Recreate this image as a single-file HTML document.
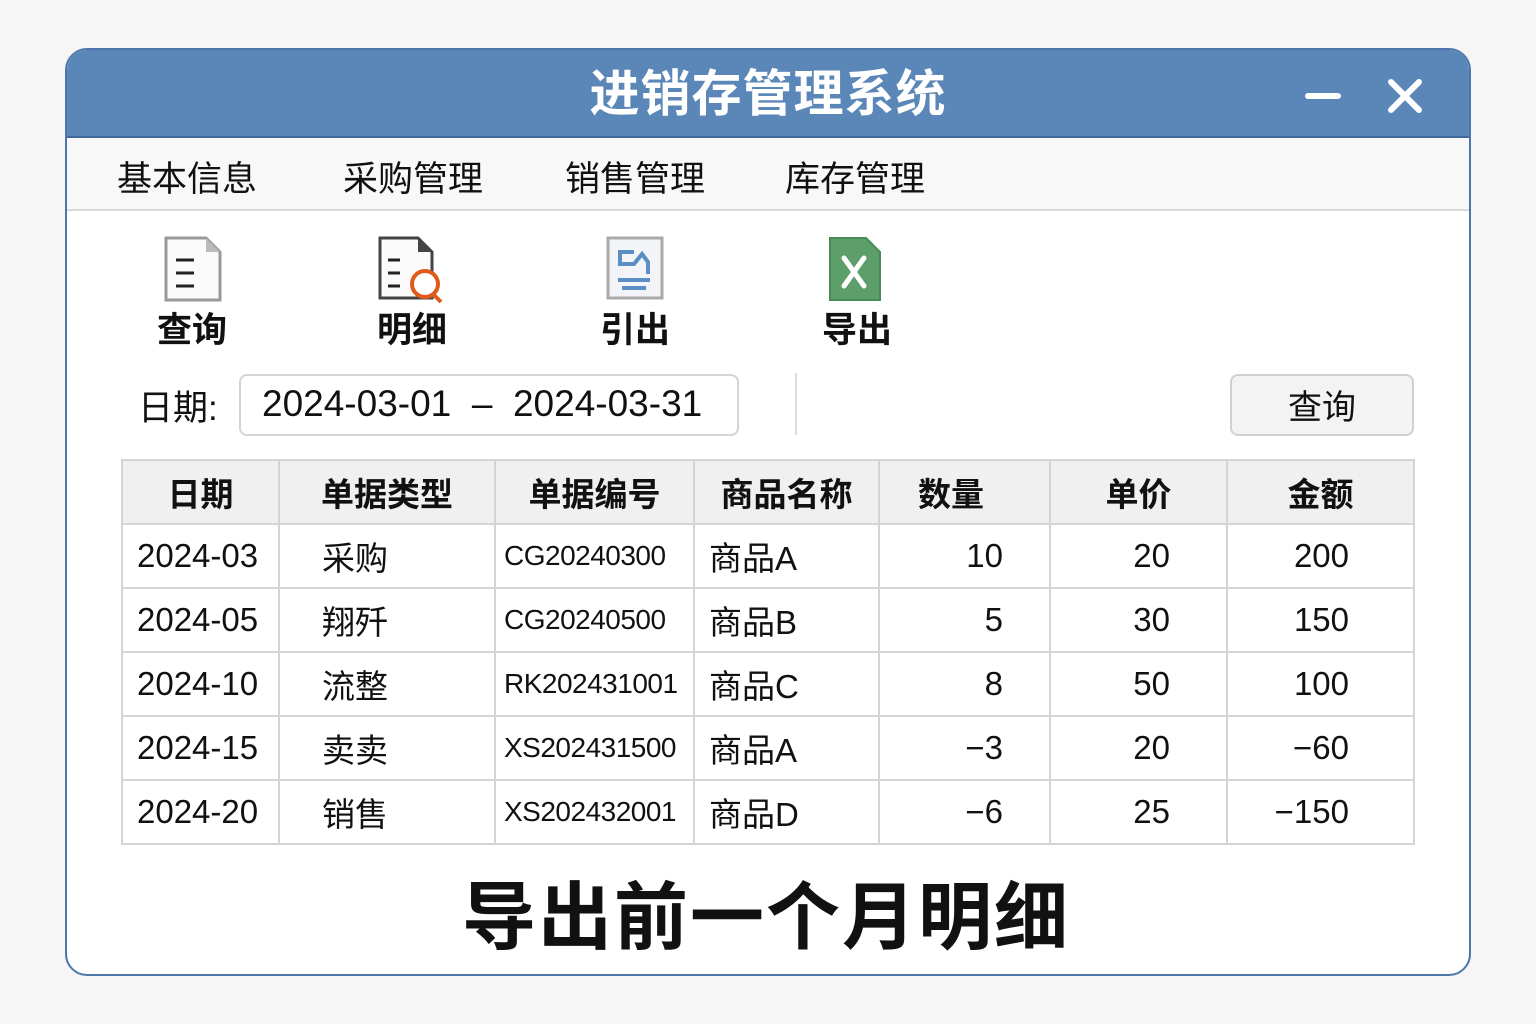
<!DOCTYPE html>
<html><head><meta charset="utf-8"><style>
*{margin:0;padding:0;box-sizing:border-box}
body{width:1536px;height:1024px;background:#f6f6f6;position:relative;overflow:hidden;font-family:"Liberation Sans","Noto Sans CJK SC",sans-serif;color:#111}
.a{position:absolute;white-space:nowrap}
#win{position:absolute;left:65px;top:48px;width:1406px;height:928px;border:2px solid #4d77aa;border-radius:22px;background:#fff;overflow:hidden}
#title{position:absolute;left:0;top:0;width:100%;height:88px;background:#5b87b8;border-bottom:2px solid #3f6a9c}
#menu{position:absolute;left:0;top:88px;width:100%;height:73px;background:#f8f8f8;border-bottom:2px solid #d8d8d8}
table{position:absolute;left:121px;top:459px;border-collapse:collapse;font-size:33px;table-layout:fixed;width:1292px}
td{border:2px solid #d4d4d4;height:64px;padding:0 14px;overflow:hidden;white-space:nowrap}
tr.h td{background:#f0f0f0;text-align:center;font-weight:bold;font-size:33px}
.r{text-align:right}
.c{font-size:28px;padding:0 8px !important;letter-spacing:-0.5px}
</style></head><body>
<div id="win">
<div id="title"><div class="a" style="left:0;width:100%;text-align:center;top:4px;font-size:50px;font-weight:bold;color:#fff;letter-spacing:1px">进销存管理系统</div>
<div class="a" style="left:1238px;top:43px;width:36px;height:6px;background:#fff;border-radius:3px"></div>
<svg class="a" style="left:1320px;top:28px" width="36" height="36"><path d="M4 4L32 32M32 4L4 32" stroke="#fff" stroke-width="6" stroke-linecap="round"/></svg>
</div>
<div id="menu">
<div class="a" style="left:50px;top:13px;font-size:35px">基本信息</div>
<div class="a" style="left:276px;top:13px;font-size:35px">采购管理</div>
<div class="a" style="left:498px;top:13px;font-size:35px">销售管理</div>
<div class="a" style="left:718px;top:13px;font-size:35px">库存管理</div>
</div>
</div>
<svg class="a" style="left:164px;top:236px" width="58" height="66"><path d="M2 2H42L56 16V64H2Z" fill="#fbfbfb" stroke="#999" stroke-width="3"/><path d="M42 2V16H56" fill="#bbb"/><path d="M12 24H30M12 37H30M12 50H30" stroke="#222" stroke-width="3"/></svg>
<div class="a" style="left:157px;top:302px;font-size:35px;font-weight:bold">查询</div>
<svg class="a" style="left:378px;top:236px" width="68" height="68"><path d="M2 2H40L54 16V62H2Z" fill="#fbfbfb" stroke="#444" stroke-width="3"/><path d="M40 2V16H54" fill="#444"/><path d="M10 24H22M10 37H22M10 50H22" stroke="#222" stroke-width="3"/><circle cx="47" cy="48" r="13" fill="#fff" stroke="#e05a1c" stroke-width="4"/><path d="M55 58L63 66" stroke="#e05a1c" stroke-width="4"/></svg>
<div class="a" style="left:377px;top:302px;font-size:35px;font-weight:bold">明细</div>
<svg class="a" style="left:606px;top:236px" width="58" height="64"><rect x="2" y="2" width="54" height="60" fill="#f2f4f7" stroke="#aaa" stroke-width="3"/><path d="M12 16H28M14 16V28H28L36 18L42 26V38M12 44H44M16 52H40" stroke="#5a8ec4" stroke-width="4" fill="none"/></svg>
<div class="a" style="left:600px;top:302px;font-size:35px;font-weight:bold">引出</div>
<svg class="a" style="left:828px;top:236px" width="54" height="66"><path d="M2 2H38L52 16V64H2Z" fill="#5c9f6a" stroke="#4a8a58" stroke-width="2"/><path d="M16 22L36 50M36 22L16 50" stroke="#fff" stroke-width="5" stroke-linecap="round"/></svg>
<div class="a" style="left:822px;top:302px;font-size:35px;font-weight:bold">导出</div>
<div class="a" style="left:138px;top:380px;font-size:35px">日期:</div>
<div class="a" style="left:239px;top:374px;width:500px;height:62px;border:2px solid #d4d4d4;border-radius:8px;background:#fff;font-size:37px;padding:7px 0 0 21px">2024-03-01 &nbsp;– &nbsp;2024-03-31</div>
<div class="a" style="left:795px;top:373px;width:2px;height:62px;background:#ddd"></div>
<div class="a" style="left:1230px;top:374px;width:184px;height:62px;border:2px solid #d0d0d0;border-radius:8px;background:#f3f3f3;font-size:34px;text-align:center;padding-top:4px">查询</div>
<table>
<colgroup><col style="width:157px"><col style="width:216px"><col style="width:199px"><col style="width:185px"><col style="width:171px"><col style="width:177px"><col style="width:187px"></colgroup>
<tr class="h"><td>日期</td><td>单据类型</td><td>单据编号</td><td>商品名称</td><td style="text-align:left;padding-left:38px">数量</td><td>单价</td><td>金额</td></tr>
<tr><td>2024-03</td><td style="padding-left:42px">采购</td><td class="c">CG20240300</td><td>商品A</td><td class="r" style="padding-right:46px">10</td><td class="r" style="padding-right:56px">20</td><td class="r" style="padding-right:64px">200</td></tr>
<tr><td>2024-05</td><td style="padding-left:42px">翔歼</td><td class="c">CG20240500</td><td>商品B</td><td class="r" style="padding-right:46px">5</td><td class="r" style="padding-right:56px">30</td><td class="r" style="padding-right:64px">150</td></tr>
<tr><td>2024-10</td><td style="padding-left:42px">流整</td><td class="c">RK202431001</td><td>商品C</td><td class="r" style="padding-right:46px">8</td><td class="r" style="padding-right:56px">50</td><td class="r" style="padding-right:64px">100</td></tr>
<tr><td>2024-15</td><td style="padding-left:42px">卖卖</td><td class="c">XS202431500</td><td>商品A</td><td class="r" style="padding-right:46px">−3</td><td class="r" style="padding-right:56px">20</td><td class="r" style="padding-right:64px">−60</td></tr>
<tr><td>2024-20</td><td style="padding-left:42px">销售</td><td class="c">XS202432001</td><td>商品D</td><td class="r" style="padding-right:46px">−6</td><td class="r" style="padding-right:56px">25</td><td class="r" style="padding-right:64px">−150</td></tr>
</table>
<div class="a" style="left:462px;top:858px;font-size:74px;font-weight:bold;letter-spacing:2px">导出前一个月明细</div>
</body></html>
